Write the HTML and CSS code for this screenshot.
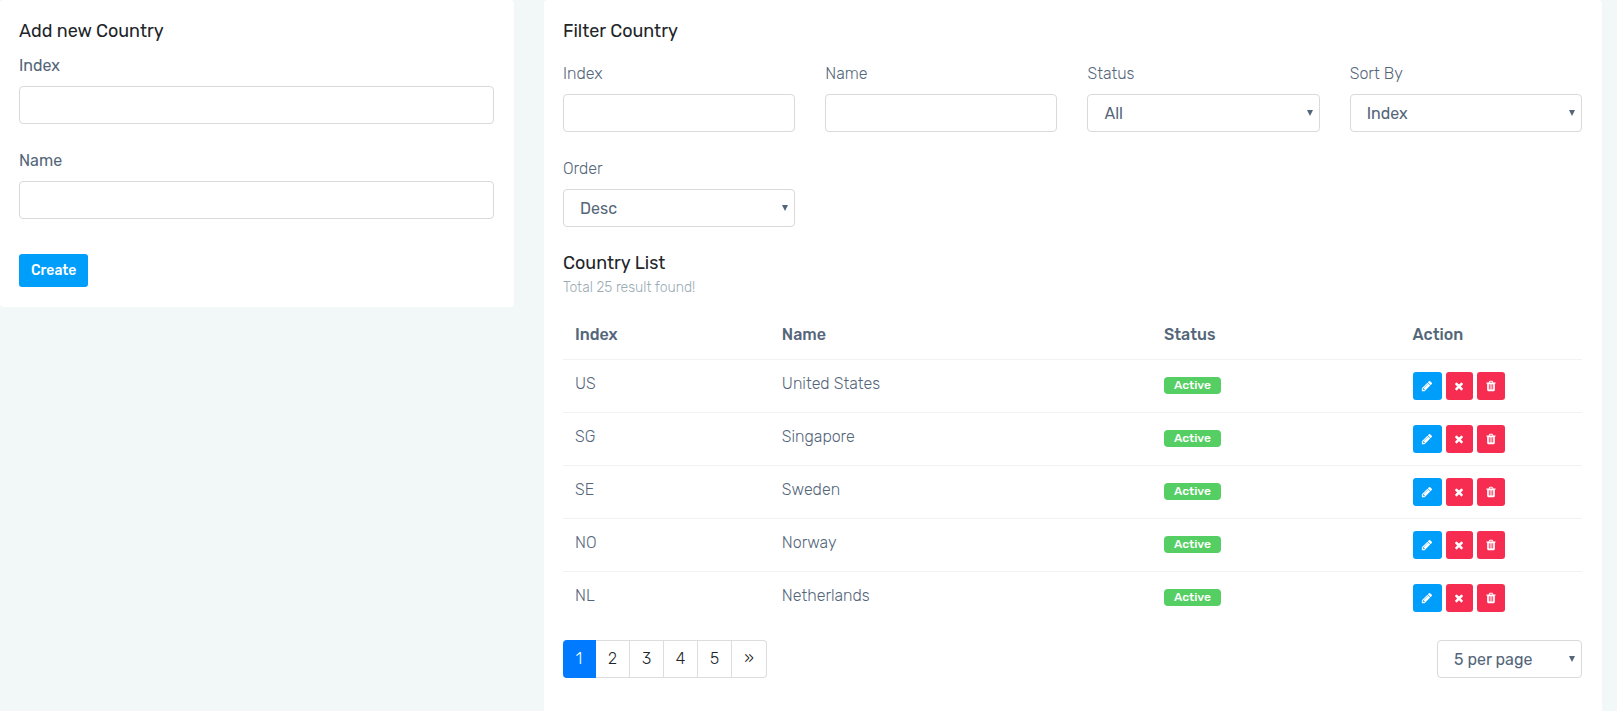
FILE: index.html
```html
<!DOCTYPE html>
<html lang="en">
<head>
<meta charset="utf-8">
<title>Countries</title>
<link rel="stylesheet" href="styles.css">
</head>
<body>
<svg class="sprite" aria-hidden="true">
  <symbol id="pencil" viewBox="0 0 1792 1792"><path d="M491 1536l91-91-235-235-91 91v107h128v128h107zm523-928q0-22-22-22-10 0-17 7l-542 542q-7 7-7 17 0 22 22 22 10 0 17-7l542-542q7-7 7-17zm-54-192l416 416-832 832h-416v-416zm683 96q0 53-37 90l-166 166-416-416 166-165q36-38 90-38 53 0 91 38l235 234q37 39 37 91z"/></symbol>
  <symbol id="times" viewBox="0 0 1792 1792"><path d="M1490 1322q0 40-28 68l-136 136q-28 28-68 28t-68-28l-294-294-294 294q-28 28-68 28t-68-28l-136-136q-28-28-28-68t28-68l294-294-294-294q-28-28-28-68t28-68l136-136q28-28 68-28t68 28l294 294 294-294q28-28 68-28t68 28l136 136q28 28 28 68t-28 68l-294 294 294 294q28 28 28 68z"/></symbol>
  <symbol id="trash" viewBox="0 0 1792 1792"><path d="M704 1376v-704q0-14-9-23t-23-9h-64q-14 0-23 9t-9 23v704q0 14 9 23t23 9h64q14 0 23-9t9-23zm256 0v-704q0-14-9-23t-23-9h-64q-14 0-23 9t-9 23v704q0 14 9 23t23 9h64q14 0 23-9t9-23zm256 0v-704q0-14-9-23t-23-9h-64q-14 0-23 9t-9 23v704q0 14 9 23t23 9h64q14 0 23-9t9-23zm-544-992h448l-48-117q-7-9-17-11h-317q-10 2-17 11zm928 32v64q0 14-9 23t-23 9h-96v948q0 83-47 143.5t-113 60.5h-832q-66 0-113-58.5t-47-141.5v-952h-96q-14 0-23-9t-9-23v-64q0-14 9-23t23-9h309l70-167q15-37 54-63t79-26h320q40 0 79 26t54 63l70 167h309q14 0 23 9t9 23z"/></symbol>
</svg>
<main class="row">
  <div class="col col-side">
    <form class="card">
      <h5 class="title">Add new Country</h5>
      <div class="fields">
        <div class="field"><label class="label label-strong" for="new-index">Index</label><input class="control" id="new-index" type="text"></div>
        <div class="field"><label class="label label-strong" for="new-name">Name</label><input class="control" id="new-name" type="text"></div>
      </div>
      <button class="btn-create" type="submit">Create</button>
    </form>
  </div>
  <div class="col col-main">
    <section class="card card-tall">
      <h5 class="title">Filter Country</h5>
      <form class="filters">
        <div class="field"><label class="label" for="f-index">Index</label><input class="control" id="f-index" type="text"></div>
        <div class="field"><label class="label" for="f-name">Name</label><input class="control" id="f-name" type="text"></div>
        <div class="field"><label class="label" for="f-status">Status</label><div class="select"><select class="control" id="f-status"><option>All</option></select></div></div>
        <div class="field"><label class="label" for="f-sort">Sort By</label><div class="select"><select class="control" id="f-sort"><option>Index</option></select></div></div>
        <div class="field"><label class="label" for="f-order">Order</label><div class="select"><select class="control" id="f-order"><option>Desc</option></select></div></div>
      </form>
      <h5 class="title">Country List</h5>
      <p class="summary">Total 25 result found!</p>
      <table class="table">
        <thead><tr><th class="c-index">Index</th><th class="c-name">Name</th><th class="c-status">Status</th><th>Action</th></tr></thead>
        <tbody>
          <tr><td>US</td><td>United States</td><td><span class="badge">Active</span></td><td><div class="actions"><button class="act edit" aria-label="Edit"><svg class="icon"><use href="#pencil"/></svg></button><button class="act disable" aria-label="Disable"><svg class="icon"><use href="#times"/></svg></button><button class="act delete" aria-label="Delete"><svg class="icon"><use href="#trash"/></svg></button></div></td></tr>
          <tr><td>SG</td><td>Singapore</td><td><span class="badge">Active</span></td><td><div class="actions"><button class="act edit" aria-label="Edit"><svg class="icon"><use href="#pencil"/></svg></button><button class="act disable" aria-label="Disable"><svg class="icon"><use href="#times"/></svg></button><button class="act delete" aria-label="Delete"><svg class="icon"><use href="#trash"/></svg></button></div></td></tr>
          <tr><td>SE</td><td>Sweden</td><td><span class="badge">Active</span></td><td><div class="actions"><button class="act edit" aria-label="Edit"><svg class="icon"><use href="#pencil"/></svg></button><button class="act disable" aria-label="Disable"><svg class="icon"><use href="#times"/></svg></button><button class="act delete" aria-label="Delete"><svg class="icon"><use href="#trash"/></svg></button></div></td></tr>
          <tr><td>NO</td><td>Norway</td><td><span class="badge">Active</span></td><td><div class="actions"><button class="act edit" aria-label="Edit"><svg class="icon"><use href="#pencil"/></svg></button><button class="act disable" aria-label="Disable"><svg class="icon"><use href="#times"/></svg></button><button class="act delete" aria-label="Delete"><svg class="icon"><use href="#trash"/></svg></button></div></td></tr>
          <tr><td>NL</td><td>Netherlands</td><td><span class="badge">Active</span></td><td><div class="actions"><button class="act edit" aria-label="Edit"><svg class="icon"><use href="#pencil"/></svg></button><button class="act disable" aria-label="Disable"><svg class="icon"><use href="#times"/></svg></button><button class="act delete" aria-label="Delete"><svg class="icon"><use href="#trash"/></svg></button></div></td></tr>
        </tbody>
      </table>
      <div class="footer">
        <nav class="pages" aria-label="Pages">
          <a class="page current" href="#1" aria-current="page">1</a><a class="page" href="#2">2</a><a class="page" href="#3">3</a><a class="page" href="#4">4</a><a class="page" href="#5">5</a><a class="page" href="#next" aria-label="Next">»</a>
        </nav>
        <div class="select per-page"><select class="control" aria-label="Rows per page"><option>5 per page</option></select></div>
      </div>
    </section>
  </div>
</main>
</body>
</html>
```
FILE: styles.css
```css
* { box-sizing: border-box; }

body {
  margin: 0;
  background: #f2f7f8;
  color: #54667a;
  font-family: Rubik, Roboto, "Liberation Sans", sans-serif;
  font-size: 16px;
  font-weight: 300;
  line-height: 24px;
  overflow-x: hidden;
}

.sprite { display: none; }

.row {
  display: flex;
  align-items: flex-start;
  margin-left: -15px;
  min-height: 100vh;
}
.col { padding: 0 15px; }
.col-side { width: 33.3333%; }
.col-main { width: 66.6667%; }

.card {
  background: #fff;
  border-radius: 4px;
  padding: 20px 20px 20px 19px;
}
.card-tall {
  min-height: 100vh;
  border-radius: 4px 4px 0 0;
}

.title {
  margin: 0;
  color: #212529;
  font-size: 18px;
  font-weight: 400;
  line-height: 22px;
}

.fields {
  display: grid;
  gap: 25px;
  margin: 12px 0 35px;
}
.filters {
  display: grid;
  grid-template-columns: repeat(4, 1fr);
  gap: 25px 30px;
  margin: 20px 0 25px;
}
.field {
  display: flex;
  flex-direction: column;
  gap: 8px;
}
.label-strong { font-weight: 400; }

.control {
  width: 100%;
  height: 38px;
  padding: 2px 16px 0;
  border: 1px solid #d9d9d9;
  border-radius: 4px;
  background: #fff;
  color: #54667a;
  font: inherit;
  font-weight: 400;
  appearance: none;
  display: block;
}
.select { position: relative; }
.select::after {
  content: "";
  position: absolute;
  top: 16px;
  right: 7px;
  border: solid transparent;
  border-width: 6px 3px 0;
  border-top-color: #54667a;
  pointer-events: none;
}

.btn-create {
  display: block;
  height: 33px;
  padding: 0 12px;
  border: 0;
  border-radius: 3px;
  background: #009efb;
  color: #fff;
  font: inherit;
  font-size: 14px;
  font-weight: 500;
}

.summary {
  margin: 3px 0 11px;
  color: #99abb4;
  font-size: 14px;
  line-height: 22px;
}

.table {
  width: 100%;
  border-collapse: separate;
  border-spacing: 0;
}
.table th, .table td {
  padding: 12px;
  text-align: left;
  vertical-align: top;
}
.table th { font-weight: 500; padding-top: 13px; }
.table td { height: 53px; border-top: 1px solid #f1f2f3; }
.c-index { width: 20.3%; }
.c-name { width: 37.5%; }
.c-status { width: 24.4%; }

.badge {
  display: block;
  width: max-content;
  margin-top: 5px;
  padding: 0 10px;
  border-radius: 4px;
  background: #55ce63;
  color: #fff;
  font-size: 12px;
  font-weight: 500;
  line-height: 17px;
}

.actions { display: flex; gap: 4px; }
.act {
  display: flex;
  align-items: center;
  justify-content: center;
  width: 28px;
  height: 28px;
  padding: 0;
  border: 0;
  border-radius: 3px;
  background: #f62d51;
}
.edit { width: 29px; background: #009efb; }
.disable { width: 27px; }
.icon { width: 12px; height: 12px; fill: #fff; }

.footer {
  display: flex;
  justify-content: space-between;
  margin-top: 16px;
}
.pages { display: flex; }
.page {
  display: flex;
  align-items: center;
  justify-content: center;
  min-width: 34px;
  height: 38px;
  border: 1px solid #dddddd;
  border-left-width: 0;
  color: #212529;
  text-decoration: none;
}
.page:last-child { min-width: 35px; border-radius: 0 4px 4px 0; }
.current {
  min-width: 33px;
  border-color: #007bff;
  border-radius: 4px 0 0 4px;
  background: #007bff;
  color: #fff;
}
.per-page { width: 145px; }
```
